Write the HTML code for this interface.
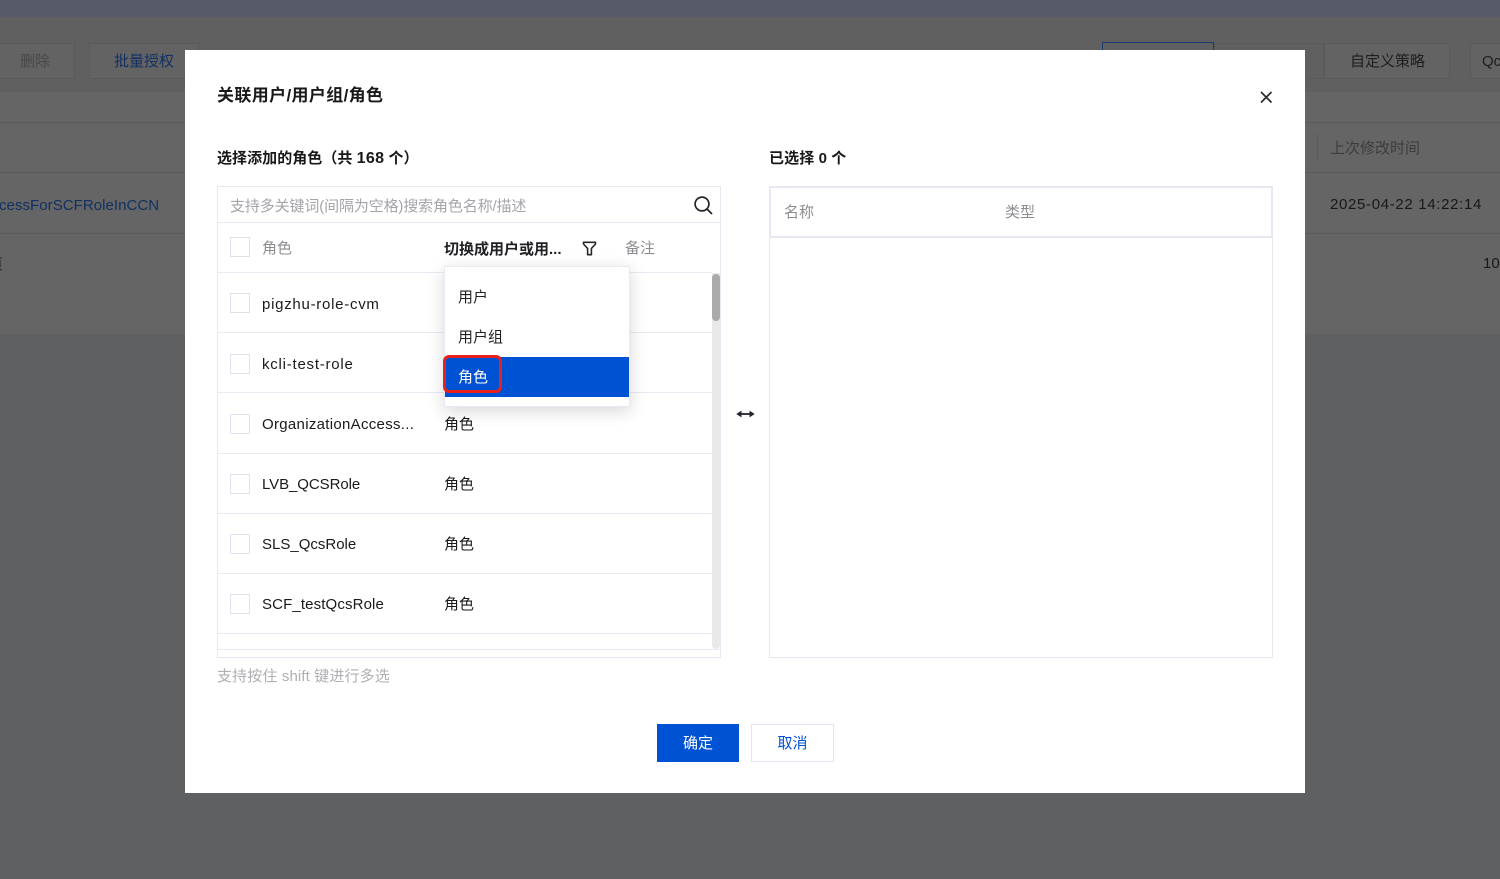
<!DOCTYPE html>
<html lang="zh"><head><meta charset="utf-8"><title>关联用户</title>
<style>
html,body{margin:0;padding:0;width:1500px;height:879px;overflow:hidden;background:#5f6061;font-family:"Liberation Sans","Noto Sans CJK SC",sans-serif;}
.a{position:absolute;white-space:nowrap;}
.b{position:absolute;box-sizing:border-box;}
.t{position:absolute;white-space:nowrap;line-height:20px;font-size:15px;color:#1a1a1b;}
.cb{position:absolute;left:230px;width:20px;height:20px;box-sizing:border-box;border:1px solid #dfe2ec;background:#fff;}
.hl{position:absolute;height:1px;background:#e8eaf3;}
</style></head><body>
<!-- background page -->
<div class="b" style="left:0;top:0;width:1500px;height:17px;background:#575a69"></div>
<div class="b" style="left:0;top:17px;width:1500px;height:75px;background:#606060"></div>
<div class="b" style="left:0;top:92px;width:1500px;height:242px;background:#656565"></div>
<div class="b" style="left:0;top:334px;width:1500px;height:545px;background:#5f6061"></div>
<div class="hl" style="left:0;top:122px;width:1500px;background:#5a5a5a"></div>
<div class="hl" style="left:0;top:172px;width:1500px;background:#5a5a5a"></div>
<div class="hl" style="left:0;top:233px;width:1500px;background:#5a5a5a"></div>
<div class="b" style="left:-10px;top:43px;width:85px;height:36px;border:1px solid #5a5a5a;background:#636363"></div>
<div class="b" style="left:89px;top:43px;width:110px;height:36px;border:1px solid #5a5a5a;background:#636363"></div>
<div class="b" style="left:1102px;top:42px;width:112px;height:20px;border:1px solid #1b3a70"></div>
<div class="b" style="left:1214px;top:43px;width:110px;height:36px;border:1px solid #5a5a5a"></div>
<div class="b" style="left:1324px;top:43px;width:126px;height:36px;border:1px solid #5a5a5a;background:#636363"></div>
<div class="b" style="left:1470px;top:43px;width:40px;height:36px;border:1px solid #5a5a5a;background:#636363"></div>
<div class="a" style="left:20px;top:52px;font-size:15px;line-height:20px;color:#484848">删除</div>
<div class="a" style="left:114px;top:52px;font-size:15px;line-height:20px;color:#123063">批量授权</div>
<div class="a" style="left:1350px;top:52px;font-size:15px;line-height:20px;color:#1e1e1e">自定义策略</div>
<div class="a" style="left:1482px;top:52px;font-size:15px;line-height:20px;color:#1e1e1e">Qc</div>
<div class="a" style="left:-1px;top:196px;font-size:15px;line-height:20px;color:#123063;letter-spacing:.05px">cessForSCFRoleInCCN</div>
<div class="a" style="left:1330px;top:139px;font-size:15px;line-height:20px;color:#3c3c3c">上次修改时间</div>
<div class="a" style="left:1330px;top:195px;font-size:15px;line-height:20px;color:#181818;letter-spacing:.67px">2025-04-22 14:22:14</div>
<div class="a" style="left:1483px;top:254px;font-size:15px;line-height:20px;color:#181818">10</div>
<div class="a" style="left:-12px;top:255px;font-size:15px;line-height:20px;color:#282828">页</div>
<div class="b" style="left:1317px;top:134px;width:1px;height:27px;background:#5a5a5a"></div>
<!-- modal -->
<div class="b" style="left:185px;top:50px;width:1120px;height:743px;background:#fff"></div>
<div class="a" style="left:217px;top:85px;font-size:17px;line-height:22px;font-weight:bold;color:#18191a;letter-spacing:.36px">关联用户/用户组/角色</div>
<svg class="a" style="left:1259px;top:90px" width="14" height="14" viewBox="0 0 14 14"><path d="M2 2L12.5 12.5M12.5 2L2 12.5" stroke="#2a2c33" stroke-width="1.7" fill="none"/></svg>
<div class="a" style="left:217px;top:149px;font-size:15px;line-height:20px;font-weight:bold;color:#18191a;letter-spacing:.05px">选择添加的角色（共 <span style="font-size:16px;letter-spacing:.3px">168</span> 个）</div>
<div class="a" style="left:769px;top:149px;font-size:15px;line-height:20px;font-weight:bold;color:#18191a;letter-spacing:.1px">已选择 0 个</div>
<!-- left panel -->
<div class="b" style="left:217px;top:186px;width:504px;height:472px;border:1px solid #e6e8f2;background:#fff"></div>
<div class="hl" style="left:218px;top:222px;width:502px"></div>
<div class="a" style="left:230px;top:197px;font-size:15px;line-height:20px;color:#a3a5a9;letter-spacing:-.13px">支持多关键词(间隔为空格)搜索角色名称/描述</div>
<svg class="a" style="left:692px;top:194px" width="22" height="22" viewBox="0 0 22 22"><circle cx="10" cy="10" r="6.9" stroke="#24262c" stroke-width="1.7" fill="none"/><path d="M15 15L20 20" stroke="#24262c" stroke-width="1.8" fill="none"/></svg>
<div class="cb" style="top:237px"></div>
<div class="a" style="left:262px;top:239px;font-size:15px;line-height:20px;color:#8b8d90">角色</div>
<div class="a" style="left:444px;top:240px;font-size:15px;line-height:20px;font-weight:bold;color:#202124">切换成用户或用...</div>
<svg class="a" style="left:582px;top:241px" width="15" height="15" viewBox="0 0 15 15"><path d="M1.5 1.3H13.5V3L9.4 7.4V13.7H5.6V7.4L1.5 3Z" stroke="#25272c" stroke-width="1.6" fill="none" stroke-linejoin="round"/></svg>
<div class="a" style="left:625px;top:239px;font-size:15px;line-height:20px;color:#8b8d90">备注</div>
<div class="hl" style="left:218px;top:272px;width:494px"></div>
<div class="hl" style="left:218px;top:332px;width:494px"></div>
<div class="hl" style="left:218px;top:392px;width:494px"></div>
<div class="hl" style="left:218px;top:453px;width:494px"></div>
<div class="hl" style="left:218px;top:513px;width:494px"></div>
<div class="hl" style="left:218px;top:573px;width:494px"></div>
<div class="hl" style="left:218px;top:633px;width:494px"></div>
<div class="hl" style="left:218px;top:649px;width:502px"></div>
<div class="cb" style="top:293px"></div><div class="t" style="left:262px;top:295px;letter-spacing:.73px">pigzhu-role-cvm</div>
<div class="cb" style="top:354px"></div><div class="t" style="left:262px;top:355px;letter-spacing:.77px">kcli-test-role</div>
<div class="cb" style="top:414px"></div><div class="t" style="left:262px;top:415px;letter-spacing:.3px">OrganizationAccess...</div><div class="t" style="left:444px;top:415px">角色</div>
<div class="cb" style="top:474px"></div><div class="t" style="left:262px;top:475px;letter-spacing:-.07px">LVB_QCSRole</div><div class="t" style="left:444px;top:475px">角色</div>
<div class="cb" style="top:534px"></div><div class="t" style="left:262px;top:535px">SLS_QcsRole</div><div class="t" style="left:444px;top:535px">角色</div>
<div class="cb" style="top:594px"></div><div class="t" style="left:262px;top:595px;letter-spacing:.13px">SCF_testQcsRole</div><div class="t" style="left:444px;top:595px">角色</div>
<!-- scrollbar -->
<div class="b" style="left:712px;top:273px;width:8px;height:376px;background:#e9e9ea;border-radius:0 0 4px 4px"></div>
<div class="b" style="left:712px;top:274px;width:8px;height:47px;background:#a9aaac;border-radius:4px"></div>
<!-- dropdown -->
<div class="b" style="left:444px;top:266px;width:186px;height:141px;background:#fff;border:1px solid #e8eaf3;box-shadow:0 4px 16px rgba(0,0,0,.16)"></div>
<div class="a" style="left:458px;top:288px;font-size:15px;line-height:20px;color:#1f2023">用户</div>
<div class="a" style="left:458px;top:328px;font-size:15px;line-height:20px;color:#1f2023">用户组</div>
<div class="b" style="left:445px;top:357px;width:184px;height:40px;background:#0052d4"></div>
<div class="a" style="left:458px;top:368px;font-size:15px;line-height:20px;color:#fff">角色</div>
<div class="b" style="left:443px;top:355px;width:59px;height:38px;border:3px solid #e8211d;border-radius:6px"></div>
<!-- arrows -->
<svg class="a" style="left:736px;top:408px" width="19" height="12" viewBox="0 0 19 12"><path d="M4 6H15" stroke="#23252b" stroke-width="1.8"/><path d="M0.3 6L5.5 2.6V9.4ZM18.7 6L13.5 2.6V9.4Z" fill="#23252b"/></svg>
<!-- right panel -->
<div class="b" style="left:769px;top:186px;width:504px;height:472px;border:1px solid #e6e8f2;background:#fff"></div>
<div class="b" style="left:769px;top:186px;width:504px;height:52px;border:2px solid #e6e9f3;background:#fff"></div>
<div class="a" style="left:784px;top:203px;font-size:15px;line-height:20px;color:#8b8d90">名称</div>
<div class="a" style="left:1005px;top:203px;font-size:15px;line-height:20px;color:#8b8d90">类型</div>
<div class="a" style="left:217px;top:667px;font-size:15px;line-height:20px;color:#adafb3;letter-spacing:.13px">支持按住 shift 键进行多选</div>
<!-- buttons -->
<div class="b" style="left:657px;top:724px;width:82px;height:38px;background:#0052d4;color:#fff;font-size:15px;line-height:40px;text-align:center">确定</div>
<div class="b" style="left:751px;top:724px;width:83px;height:38px;background:#fff;border:1px solid #e3e6f0;color:#0052d4;font-size:15px;line-height:38px;text-align:center">取消</div>
</body></html>
